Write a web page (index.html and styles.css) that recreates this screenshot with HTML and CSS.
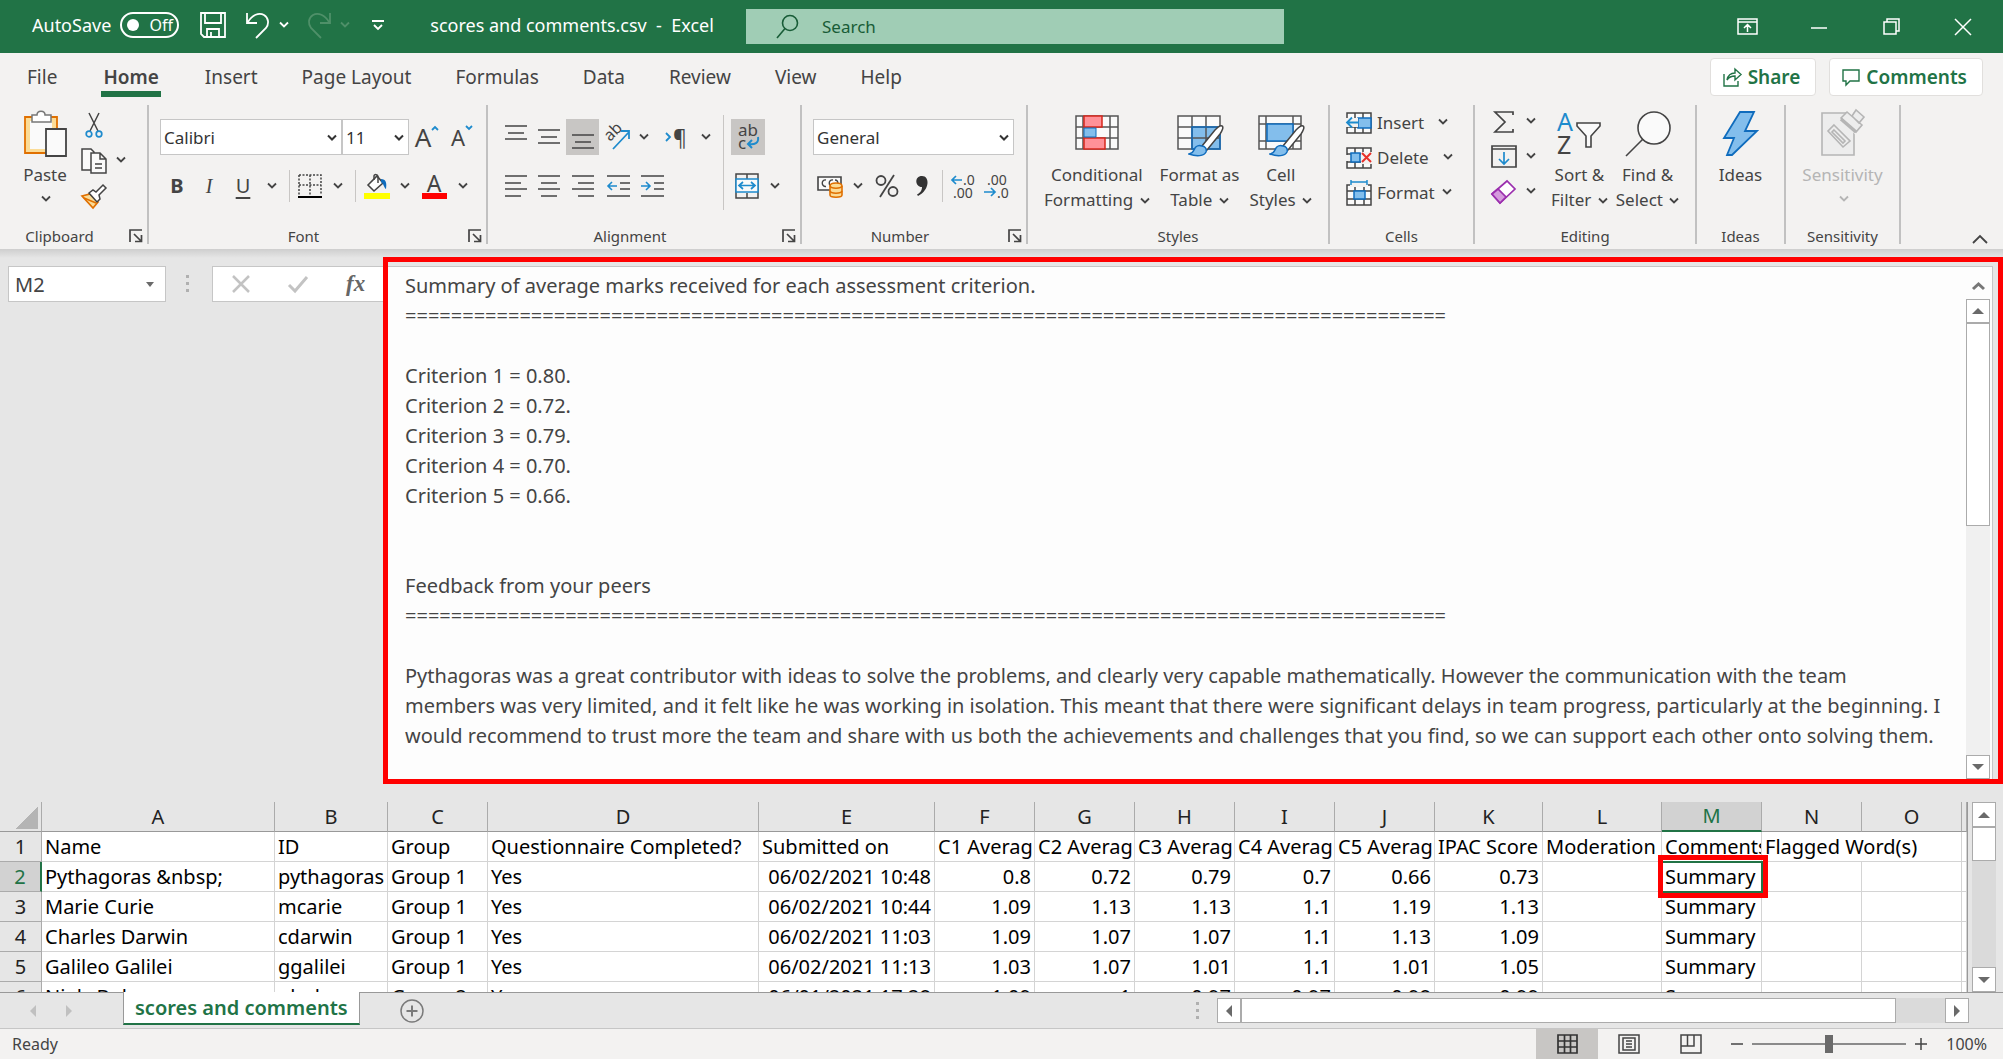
FILE: index.html
```html
<!DOCTYPE html>
<html lang="en">
<head>
    <meta charset="UTF-8">
    <meta name="viewport" content="width=device-width, initial-scale=1.0">
    <title>scores and comments.csv - Excel</title>
    <link rel="stylesheet" href="styles.css">
</head>
<body>
    <!-- shared icons -->
    <svg class="defs" width="0" height="0">
        <symbol id="chev" viewBox="0 0 10 7"><path d="M1 1.5l4 4 4-4" fill="none" stroke="currentColor" stroke-width="1.8"/></symbol>
        <symbol id="launcher" viewBox="0 0 14 14"><path d="M1 13V1h12M5 5l7 7M12.500 6v6.500H6" fill="none" stroke="#444" stroke-width="1.700"/></symbol>
        <symbol id="brush" viewBox="0 0 36 32"><path d="M34 1c2 1 0 5-2 8L19 25l-5-4L27 5c3-3 5-5 7-4z" fill="#fff" stroke="#444" stroke-width="1.500"/><path d="M14 21c3 0 5 3 4 6-2 4-9 5-17 2 5-1 4-3 6-6 1-2 4-3 7-2z" fill="#83beec" stroke="#0f6cbd" stroke-width="1.500"/></symbol>
    </svg>

    <header class="titlebar">
        <div class="quick-access">
            <span>AutoSave</span>
            <button class="toggle" aria-label="AutoSave off"><span class="knob"></span>Off</button>
            <button class="save" aria-label="Save">
                <svg width="26" height="26" viewBox="0 0 26 26" fill="none" stroke="#fff" stroke-width="1.800"><path d="M1 1h24v24H4l-3-3zM5 1v10h16V1M7 25v-8h12v8M11 25v-5"/></svg>
            </button>
            <button class="undo" aria-label="Undo">
                <svg width="25" height="27" viewBox="0 0 25 27" fill="none" stroke="#fff" stroke-width="1.800"><path d="M1 1v10h10M2 10C6 3 13 0 18 3s5 9 2 13l-10 10"/></svg>
                <svg class="chev" width="10" height="7"><use href="#chev"/></svg>
            </button>
            <button class="redo" aria-label="Redo" disabled>
                <svg width="25" height="27" viewBox="0 0 25 27" fill="none" stroke="#4f9069" stroke-width="1.800"><path d="M23 1v10H13M22 10C18 3 11 0 6 3s-5 9-2 13l10 10"/></svg>
                <svg class="chev" width="10" height="7"><use href="#chev"/></svg>
            </button>
            <button class="customize" aria-label="Customize Quick Access Toolbar">
                <svg width="12" height="11" viewBox="0 0 12 11" fill="none" stroke="#fff" stroke-width="1.800"><path d="M0 1h12M2 5l4 4 4-4"/></svg>
            </button>
            <span class="doc-title">scores and comments.csv&nbsp; -&nbsp; Excel</span>
        </div>
        <div class="search">
            <label for="search">
                <svg width="23" height="25" viewBox="0 0 23 25" fill="none" stroke="#185c37" stroke-width="1.600"><circle cx="14" cy="9" r="7.500"/><path d="M9 14.500L1 24"/></svg>
            </label>
            <input type="text" id="search" placeholder="Search">
        </div>
        <div class="window-buttons">
            <button aria-label="Ribbon display options"><svg width="21" height="17" viewBox="0 0 21 17" fill="none" stroke="#fff" stroke-width="1.500"><path d="M1 1h19v15H1zM1 4h19M10.500 14V7M7 10l3.500-3.500L14 10"/></svg></button>
            <button aria-label="Minimize"><svg width="16" height="16" viewBox="0 0 16 16" stroke="#fff" stroke-width="1.500"><path d="M0 9h16"/></svg></button>
            <button aria-label="Restore"><svg width="17" height="17" viewBox="0 0 17 17" fill="none" stroke="#fff" stroke-width="1.500"><path d="M1 4h12v12H1zM4 4V1h12v12h-3"/></svg></button>
            <button aria-label="Close"><svg width="16" height="16" viewBox="0 0 16 16" stroke="#fff" stroke-width="1.500"><path d="M0 0l16 16M16 0L0 16"/></svg></button>
        </div>
    </header>

    <nav class="tabs">
        <a href="#">File</a>
        <a href="#" class="active">Home</a>
        <a href="#">Insert</a>
        <a href="#">Page Layout</a>
        <a href="#">Formulas</a>
        <a href="#">Data</a>
        <a href="#">Review</a>
        <a href="#">View</a>
        <a href="#">Help</a>
        <div class="tab-actions">
            <button>
                <svg width="19" height="19" viewBox="0 0 19 19" fill="none" stroke="#217346" stroke-width="1.400"><path d="M1 6v12h14v-5M4 12c1-5 4-7 8-7V1l6 5.500L12 12V8c-4 0-6 1-8 4z"/></svg>
                Share
            </button>
            <button>
                <svg width="18" height="17" viewBox="0 0 18 17" fill="none" stroke="#217346" stroke-width="1.400"><path d="M1 1h16v11H8l-4 4v-4H1z"/></svg>
                Comments
            </button>
        </div>
    </nav>

    <section class="ribbon">
        <div class="group clipboard">
            <div class="group-body">
                <button class="big">
                    <svg width="43" height="48" viewBox="0 0 43 48"><path d="M1 7h32v36H1z" fill="#fbdc97" stroke="#e07000" stroke-width="1.800"/><path d="M6 11h22v28H6z" fill="#fafafa"/><path d="M8 5h5c0-5 8-5 8 0h6v7H8z" fill="#fff" stroke="#777" stroke-width="1.500"/><path d="M22 19h20v27H22z" fill="#fafafa" stroke="#444" stroke-width="1.800"/></svg>
                    <span>Paste</span>
                    <svg class="chev" width="10" height="7"><use href="#chev"/></svg>
                </button>
                <div class="small-stack">
                    <button aria-label="Cut"><svg width="26" height="26" viewBox="-4 0 26 26" fill="none"><path d="M4 1l9 18M14 1L5 19" stroke="#444" stroke-width="1.500"/><circle cx="4" cy="22" r="2.800" stroke="#1e8bcd" stroke-width="1.700"/><circle cx="14" cy="22" r="2.800" stroke="#1e8bcd" stroke-width="1.700"/></svg></button>
                    <button aria-label="Copy">
                        <svg width="26" height="26" viewBox="0 0 26 26" fill="#fafafa" stroke="#444" stroke-width="1.500"><path d="M1 1h9l3 3v18H1z"/><path d="M10 5h9l6 6v14H10zM19 5v6h6M14 16h7M14 20h7"/></svg>
                        <svg class="chev" width="10" height="7"><use href="#chev"/></svg>
                    </button>
                    <button aria-label="Format Painter"><svg width="26" height="25" viewBox="0 0 26 25"><path d="M1 12l8-2 8 8-5 6z" fill="#fbdc97" stroke="#e07000" stroke-width="1.700"/><path d="M8 9l4-3 3 2 7-7 3 3-7 7 1 4-3 3z" fill="#fff" stroke="#444" stroke-width="1.500"/><path d="M3 14l12 5" stroke="#e07000" stroke-width="1.500"/></svg></button>
                </div>
            </div>
            <div class="group-label"><span>Clipboard</span><button class="launch" aria-label="Clipboard settings"><svg width="14" height="14"><use href="#launcher"/></svg></button></div>
        </div>

        <div class="group font">
            <div class="group-body rows">
                <div class="font-row1">
                    <select aria-label="Font"><option>Calibri</option></select>
                    <select aria-label="Font size"><option>11</option></select>
                    <button class="grow" aria-label="Increase font size">A<svg width="8" height="6" viewBox="0 0 8 6" fill="none" stroke="#1e8bcd" stroke-width="1.800"><path d="M1 5l3-3 3 3"/></svg></button>
                    <button class="shrink" aria-label="Decrease font size">A<svg width="8" height="6" viewBox="0 0 8 6" fill="none" stroke="#1e8bcd" stroke-width="1.800"><path d="M1 1l3 3 3-3"/></svg></button>
                </div>
                <div class="font-row2">
                    <button class="bold">B</button>
                    <button class="italic">I</button>
                    <button class="underline">U</button>
                    <svg class="chev" width="10" height="7"><use href="#chev"/></svg>
                    <span class="sep"></span>
                    <button aria-label="Borders"><svg width="24" height="24" viewBox="0 0 24 24" fill="none" stroke="#444" stroke-width="1.500"><path d="M1 1h22v20M1 1v20M12 1v20M1 11h22" stroke-dasharray="2 1.500"/><path d="M0 23h24" stroke="#000" stroke-width="2"/></svg></button>
                    <svg class="chev" width="10" height="7"><use href="#chev"/></svg>
                    <span class="sep"></span>
                    <button aria-label="Fill color"><svg width="26" height="26" viewBox="0 0 26 26"><path d="M4 12l9-9 6 7-9 8z" fill="#fff" stroke="#444" stroke-width="1.600"/><path d="M10 7V3c0-2 4-2 4 1v6" fill="none" stroke="#444" stroke-width="1.500"/><path d="M17 6c5 0 6 4 5 10-2-1-2-5-5-7z" fill="#0f6cbd"/><path d="M0 20h26v6H0z" fill="#ff0"/></svg></button>
                    <svg class="chev" width="10" height="7"><use href="#chev"/></svg>
                    <button class="font-color" aria-label="Font color">A</button>
                    <svg class="chev" width="10" height="7"><use href="#chev"/></svg>
                </div>
            </div>
            <div class="group-label"><span>Font</span><button class="launch" aria-label="Font settings"><svg width="14" height="14"><use href="#launcher"/></svg></button></div>
        </div>

        <div class="group alignment">
            <div class="group-body">
                <div class="rows">
                    <div class="align-row1">
                        <button aria-label="Top align"><svg width="22" height="24" viewBox="0 0 22 24" stroke="#444" stroke-width="1.600"><path d="M0 1h22M3 8h16M0 14h22"/></svg></button>
                        <button aria-label="Middle align"><svg width="22" height="24" viewBox="0 0 22 24" stroke="#444" stroke-width="1.600"><path d="M0 5h22M3 12h16M0 18h22"/></svg></button>
                        <button class="selected" aria-label="Bottom align"><svg width="22" height="24" viewBox="0 0 22 24" stroke="#444" stroke-width="1.600"><path d="M0 10h22M3 17h16M0 23h22"/></svg></button>
                        <button aria-label="Orientation"><svg width="26" height="26" viewBox="0 0 26 26"><text x="0" y="0" transform="translate(5 18) rotate(-45)" font-size="16" fill="#444">ab</text><path d="M8 25L24 8M16 7h8v8" fill="none" stroke="#1e8bcd" stroke-width="1.800"/></svg></button>
                        <svg class="chev" width="10" height="7"><use href="#chev"/></svg>
                        <button class="pilcrow" aria-label="Text direction"><svg width="6" height="10" viewBox="0 0 6 10" fill="none" stroke="#1e8bcd" stroke-width="1.800"><path d="M1 1l4 4-4 4"/></svg>¶</button>
                        <svg class="chev" width="10" height="7"><use href="#chev"/></svg>
                    </div>
                    <div class="align-row2">
                        <button aria-label="Align left"><svg width="22" height="24" viewBox="0 0 22 24" stroke="#444" stroke-width="1.600"><path d="M0 2h22M0 9h16M0 15h22M0 22h16"/></svg></button>
                        <button aria-label="Center"><svg width="22" height="24" viewBox="0 0 22 24" stroke="#444" stroke-width="1.600"><path d="M0 2h22M3 9h16M0 15h22M3 22h16"/></svg></button>
                        <button aria-label="Align right"><svg width="22" height="24" viewBox="0 0 22 24" stroke="#444" stroke-width="1.600"><path d="M0 2h22M6 9h16M0 15h22M6 22h16"/></svg></button>
                        <button aria-label="Decrease indent"><svg width="23" height="24" viewBox="0 0 23 24" fill="none" stroke="#444" stroke-width="1.600"><path d="M0 2h23M13 9h10M13 15h10M0 22h23"/><path d="M10 12H1M5 8l-4 4 4 4" stroke="#1e8bcd"/></svg></button>
                        <button aria-label="Increase indent"><svg width="23" height="24" viewBox="0 0 23 24" fill="none" stroke="#444" stroke-width="1.600"><path d="M0 2h23M13 9h10M13 15h10M0 22h23"/><path d="M0 12h9M5 8l4 4-4 4" stroke="#1e8bcd"/></svg></button>
                    </div>
                </div>
                <span class="sep tall"></span>
                <div class="rows wrap-col">
                    <button class="selected wrap-text" aria-label="Wrap text"><svg width="24" height="28" viewBox="0 0 24 28"><text x="2" y="13" font-size="17" fill="#444">ab</text><text x="2" y="26" font-size="17" fill="#444">c</text><path d="M22 14c1 6-3 8-10 7M16 17l-4 4 4 4" fill="none" stroke="#1e8bcd" stroke-width="2"/></svg></button>
                    <button class="merge" aria-label="Merge and center">
                        <svg width="24" height="26" viewBox="0 0 24 26" fill="none" stroke="#444" stroke-width="1.500"><path d="M1 1h22v24H1zM12 1v5M12 20v5"/><path d="M1 6h22v13H1z" fill="#fafafa" stroke="#1e8bcd"/><path d="M5 12.500h14M8 9l-4 3.500L8 16M16 9l4 3.500-4 3.500" stroke="#1e8bcd" stroke-width="1.700"/></svg>
                        <svg class="chev" width="10" height="7"><use href="#chev"/></svg>
                    </button>
                </div>
            </div>
            <div class="group-label"><span>Alignment</span><button class="launch" aria-label="Alignment settings"><svg width="14" height="14"><use href="#launcher"/></svg></button></div>
        </div>

        <div class="group number">
            <div class="group-body rows">
                <div class="number-row1">
                    <select aria-label="Number format"><option>General</option></select>
                </div>
                <div class="number-row2">
                    <button aria-label="Accounting format"><svg width="26" height="24" viewBox="0 0 26 24"><path d="M1 3h23v13H1z" fill="#fafafa" stroke="#444" stroke-width="1.600"/><path d="M9 6c-5-1-5 7 0 6.500M16 6c-5-1-5 7 0 6.500M18 6c3 0 3 2 3 4" fill="none" stroke="#444" stroke-width="1.400"/><path d="M13 12c0-4 12-4 12 0v9c0 3-12 3-12 0z" fill="#fbdc97" stroke="#e07000" stroke-width="1.600"/><path d="M13 12c1 3 11 3 12 0M13 17c1 3 11 3 12 0" fill="none" stroke="#e07000" stroke-width="1.600"/></svg></button>
                    <svg class="chev" width="10" height="7"><use href="#chev"/></svg>
                    <button class="percent" aria-label="Percent style"><svg width="24" height="24" viewBox="0 0 24 24" fill="none" stroke="#444" stroke-width="1.800"><circle cx="6" cy="6.500" r="4.500"/><circle cx="18" cy="17.500" r="4.500"/><path d="M19 1L5 23"/></svg></button>
                    <button aria-label="Comma style"><svg width="12" height="20" viewBox="0 0 12 20"><path d="M6 0c8 0 8 14-4 20l-1-1.500c4-2 5-5 5-7.500C-1 11-2 0 6 0z" fill="#333"/></svg></button>
                    <span class="sep"></span>
                    <button aria-label="Increase decimal"><svg width="26" height="26" viewBox="0 0 26 26" fill="none"><text x="13" y="12" font-size="14" fill="#444">.0</text><text x="3" y="25" font-size="14" fill="#444">.00</text><path d="M12 7H2M6 3L2 7l4 4" stroke="#1e8bcd" stroke-width="1.700"/></svg></button>
                    <button aria-label="Decrease decimal"><svg width="26" height="26" viewBox="0 0 26 26" fill="none"><text x="3" y="12" font-size="14" fill="#444">.00</text><text x="13" y="25" font-size="14" fill="#444">.0</text><path d="M0 19h11M7 15l4 4-4 4" stroke="#1e8bcd" stroke-width="1.700"/></svg></button>
                </div>
            </div>
            <div class="group-label"><span>Number</span><button class="launch" aria-label="Number settings"><svg width="14" height="14"><use href="#launcher"/></svg></button></div>
        </div>

        <div class="group styles">
            <div class="group-body">
                <button class="big">
                    <svg width="44" height="48" viewBox="0 0 44 48"><path d="M1 6h42v33H1zM1 17h42M1 28h42M8 6v33M35 6v33" fill="#fafafa" stroke="#555" stroke-width="1.500"/><path d="M9 6h18v11H9zM9 28h21v11H9z" fill="#ff9198" stroke="#d8271c" stroke-width="1.500"/><path d="M9 18h12v9H9z" fill="#83beec" stroke="#0f6cbd"/></svg>
                    <span>Conditional</span>
                    <span>Formatting <svg class="chev" width="10" height="7"><use href="#chev"/></svg></span>
                </button>
                <button class="big">
                    <svg width="48" height="48" viewBox="0 0 48 48"><path d="M2 6h42v33H2z" fill="#fafafa"/><path d="M16 17h28v22H16z" fill="#83beec"/><path d="M2 6h42v33H2zM2 17h42M2 28h42M16 6v33M30 6v33" fill="none" stroke="#555" stroke-width="1.500"/><path d="M16 39V17h28v22z" fill="none" stroke="#0f6cbd" stroke-width="1.500"/><use href="#brush" x="12" y="15" width="36" height="32"/></svg>
                    <span>Format as</span>
                    <span>Table <svg class="chev" width="10" height="7"><use href="#chev"/></svg></span>
                </button>
                <button class="big">
                    <svg width="48" height="48" viewBox="0 0 48 48"><path d="M2 6h42v33H2zM2 14h42M2 31h42M9 6v33M36 6v33" fill="#fafafa" stroke="#555" stroke-width="1.500"/><path d="M10 14h26v17H10z" fill="#83beec" stroke="#0f6cbd" stroke-width="1.500"/><use href="#brush" x="12" y="15" width="36" height="32"/></svg>
                    <span>Cell</span>
                    <span>Styles <svg class="chev" width="10" height="7"><use href="#chev"/></svg></span>
                </button>
            </div>
            <div class="group-label"><span>Styles</span></div>
        </div>

        <div class="group cells">
            <div class="group-body">
                <button>
                    <svg width="26" height="26" viewBox="0 0 26 26"><path d="M1 3h24v20H1zM1 9h24M1 17h24M9 3v20M17 3v20" fill="#fafafa" stroke="#444" stroke-width="1.500"/><path d="M12 8h13v10H12z" fill="#83beec" stroke="#0f6cbd" stroke-width="1.500"/><path d="M0 8h12v9H0z" fill="#f3f2f1"/><path d="M13 12.500H1M6 7.500l-5 5 5 5" fill="none" stroke="#1e8bcd" stroke-width="1.800"/></svg>
                    Insert <svg class="chev far" width="10" height="7"><use href="#chev"/></svg>
                </button>
                <button>
                    <svg width="26" height="26" viewBox="0 0 26 26"><path d="M1 3h24v20H1zM1 9h24M1 17h24M9 3v20M17 3v20" fill="#fafafa" stroke="#444" stroke-width="1.500"/><path d="M15 7h11v12H15zM0 10h5v6H0z" fill="#f3f2f1"/><path d="M5 8h9v9H5z" fill="#83beec" stroke="#0f6cbd" stroke-width="1.500"/><path d="M16 8l9 9M25 8l-9 9" stroke="#e8312a" stroke-width="2"/></svg>
                    Delete <svg class="chev far" width="10" height="7"><use href="#chev"/></svg>
                </button>
                <button>
                    <svg width="26" height="26" viewBox="0 0 26 26"><path d="M1 5h24v20H1zM1 11h24M1 19h24M9 5v20M18 5v20" fill="#fafafa" stroke="#444" stroke-width="1.500"/><path d="M4 0h18v7H4z" fill="#f3f2f1"/><path d="M8 11h11v8H8z" fill="#83beec" stroke="#0f6cbd" stroke-width="1.500"/><path d="M5 2h16M5 0v5M21 0v5" stroke="#1e8bcd" stroke-width="1.500"/></svg>
                    Format <svg class="chev" width="10" height="7"><use href="#chev"/></svg>
                </button>
            </div>
            <div class="group-label"><span>Cells</span></div>
        </div>

        <div class="group editing">
            <div class="group-body">
                <div class="small-stack">
                    <button aria-label="AutoSum"><svg width="26" height="24" viewBox="0 0 26 24" fill="none" stroke="#444" stroke-width="1.700"><path d="M22 5V2H4l10 10L4 22h18v-3"/></svg><svg class="chev" width="10" height="7"><use href="#chev"/></svg></button>
                    <button aria-label="Fill"><svg width="26" height="24" viewBox="0 0 26 24" fill="none" stroke="#444" stroke-width="1.700"><path d="M1 1h24v21H1zM1 4h24"/><path d="M13 7v12M8 14l5 5 5-5" stroke="#1e8bcd"/></svg><svg class="chev" width="10" height="7"><use href="#chev"/></svg></button>
                    <button aria-label="Clear"><svg width="26" height="24" viewBox="0 0 26 24"><path d="M1 14L16 1l8 8L9 23z" fill="#fff" stroke="#9b2fae" stroke-width="1.700"/><path d="M1 14l6-5 8 8-6 6z" fill="#d59add" stroke="#9b2fae" stroke-width="1.700"/></svg><svg class="chev" width="10" height="7"><use href="#chev"/></svg></button>
                </div>
                <button class="big">
                    <svg width="46" height="48" viewBox="0 0 46 48" fill="none"><text x="1" y="21" font-size="25" fill="#1e8bcd">A</text><text x="1" y="44" font-size="25" fill="#444">Z</text><path d="M21 13h23v3l-9 10v11h-5V26l-9-10z" fill="#fafafa" stroke="#444" stroke-width="1.600"/></svg>
                    <span>Sort &amp;</span>
                    <span>Filter <svg class="chev" width="10" height="7"><use href="#chev"/></svg></span>
                </button>
                <button class="big">
                    <svg width="46" height="48" viewBox="0 0 46 48" stroke="#444" stroke-width="1.600"><circle cx="29" cy="18" r="16" fill="#fafafa"/><path d="M18 29L1 46"/></svg>
                    <span>Find &amp;</span>
                    <span>Select <svg class="chev" width="10" height="7"><use href="#chev"/></svg></span>
                </button>
            </div>
            <div class="group-label"><span>Editing</span></div>
        </div>

        <div class="group ideas">
            <div class="group-body">
                <button class="big">
                    <svg width="36" height="48" viewBox="0 0 36 48"><path d="M17 2h14l-9 19h12L9 45H4l7-17H1z" fill="#83beec" stroke="#0f6cbd" stroke-width="1.800"/></svg>
                    <span>Ideas</span>
                </button>
            </div>
            <div class="group-label"><span>Ideas</span></div>
        </div>

        <div class="group sensitivity">
            <div class="group-body">
                <button class="big" disabled>
                    <svg width="44" height="48" viewBox="0 0 44 48" fill="#ededed" stroke="#b5b5b5" stroke-width="1.600"><path d="M1 3h32v42H1z"/><path d="M13 15l16 16-7 6L7 21zM13 20l11 11-2 2-11-11z"/><path d="M20 9l9-9 14 14-9 9z" stroke="#f3f2f1" fill="#f3f2f1"/><path d="M20 8l6-6 15 13-6 7zM31 6l4-6 8 7-5 6z"/><path d="M20 9l15 13" stroke-width="3.500"/></svg>
                    <span>Sensitivity</span>
                    <svg class="chev" width="10" height="7"><use href="#chev"/></svg>
                </button>
            </div>
            <div class="group-label"><span>Sensitivity</span></div>
        </div>

        <button class="collapse" aria-label="Collapse ribbon"><svg width="16" height="10" viewBox="0 0 16 10" fill="none" stroke="#444" stroke-width="1.800"><path d="M1 9l7-7 7 7"/></svg></button>
    </section>

    <section class="formula-bar">
        <div class="name-box">
            <input type="text" value="M2" aria-label="Name box">
            <span class="tri down small"></span>
        </div>
        <span class="dots"><i></i><i></i><i></i></span>
        <div class="formula-buttons">
            <button aria-label="Cancel"><svg width="18" height="18" viewBox="0 0 18 18" stroke="#c3c3c3" stroke-width="2.500"><path d="M1 1l16 16M17 1L1 17"/></svg></button>
            <button aria-label="Enter"><svg width="20" height="17" viewBox="0 0 20 17" fill="none" stroke="#c3c3c3" stroke-width="3"><path d="M1 9l6 6L19 1"/></svg></button>
            <button class="fx" aria-label="Insert function">fx</button>
        </div>
        <div class="formula-highlight">
            <div class="formula-box">
                <textarea id="formula" aria-label="Formula bar" rows="16" spellcheck="false">Summary of average marks received for each assessment criterion.
===========================================================================================

Criterion 1 = 0.80.
Criterion 2 = 0.72.
Criterion 3 = 0.79.
Criterion 4 = 0.70.
Criterion 5 = 0.66.


Feedback from your peers
===========================================================================================

Pythagoras was a great contributor with ideas to solve the problems, and clearly very capable mathematically. However the communication with the team
members was very limited, and it felt like he was working in isolation. This meant that there were significant delays in team progress, particularly at the beginning. I
would recommend to trust more the team and share with us both the achievements and challenges that you find, so we can support each other onto solving them.</textarea>
                <div class="formula-scroll">
                    <button class="collapse-bar" aria-label="Collapse formula bar"><svg width="13" height="9" viewBox="0 0 13 9" fill="none" stroke="#777" stroke-width="3"><path d="M1 8l5.500-5L12 8"/></svg></button>
                    <button class="arrow" aria-label="Scroll up"><span class="tri up"></span></button>
                    <div class="track"><div class="thumb"></div></div>
                    <button class="arrow" aria-label="Scroll down"><span class="tri down"></span></button>
                </div>
            </div>
        </div>
    </section>

    <main class="sheet">
        <div class="grid-wrap">
            <table class="grid">
                <colgroup>
                    <col class="c-head"><col class="c-a"><col class="c-b"><col class="c-c"><col class="c-d"><col class="c-e">
                    <col class="c-std" span="5"><col class="c-k"><col class="c-l"><col class="c-std" span="3"><col class="c-rest">
                </colgroup>
                <thead>
                    <tr><th class="corner"></th><th>A</th><th>B</th><th>C</th><th>D</th><th>E</th><th>F</th><th>G</th><th>H</th><th>I</th><th>J</th><th>K</th><th>L</th><th class="current">M</th><th>N</th><th>O</th><th></th></tr>
                </thead>
                <tbody>
                    <tr><th>1</th><td>Name</td><td>ID</td><td>Group</td><td>Questionnaire Completed?</td><td>Submitted on</td><td>C1 Averag</td><td>C2 Averag</td><td>C3 Averag</td><td>C4 Averag</td><td>C5 Averag</td><td>IPAC Score</td><td>Moderation</td><td>Comments</td><td colspan="2">Flagged Word(s)</td><td></td></tr>
                    <tr><th class="current">2</th><td>Pythagoras &amp;nbsp;</td><td>pythagoras</td><td>Group 1</td><td>Yes</td><td class="num">06/02/2021 10:48</td><td class="num">0.8</td><td class="num">0.72</td><td class="num">0.79</td><td class="num">0.7</td><td class="num">0.66</td><td class="num">0.73</td><td></td><td class="active-cell">Summary<span class="marker"></span></td><td></td><td></td><td></td></tr>
                    <tr><th>3</th><td>Marie Curie</td><td>mcarie</td><td>Group 1</td><td>Yes</td><td class="num">06/02/2021 10:44</td><td class="num">1.09</td><td class="num">1.13</td><td class="num">1.13</td><td class="num">1.1</td><td class="num">1.19</td><td class="num">1.13</td><td></td><td>Summary</td><td></td><td></td><td></td></tr>
                    <tr><th>4</th><td>Charles Darwin</td><td>cdarwin</td><td>Group 1</td><td>Yes</td><td class="num">06/02/2021 11:03</td><td class="num">1.09</td><td class="num">1.07</td><td class="num">1.07</td><td class="num">1.1</td><td class="num">1.13</td><td class="num">1.09</td><td></td><td>Summary</td><td></td><td></td><td></td></tr>
                    <tr><th>5</th><td>Galileo Galilei</td><td>ggalilei</td><td>Group 1</td><td>Yes</td><td class="num">06/02/2021 11:13</td><td class="num">1.03</td><td class="num">1.07</td><td class="num">1.01</td><td class="num">1.1</td><td class="num">1.01</td><td class="num">1.05</td><td></td><td>Summary</td><td></td><td></td><td></td></tr>
                    <tr><th>6</th><td>Niels Bohr</td><td>nbohr</td><td>Group 2</td><td>Yes</td><td class="num">06/01/2021 17:28</td><td class="num">1.09</td><td class="num">1</td><td class="num">0.97</td><td class="num">0.97</td><td class="num">0.98</td><td class="num">0.99</td><td></td><td>Summary</td><td></td><td></td><td></td></tr>
                </tbody>
            </table>
        </div>
        <div class="vscroll">
            <button class="arrow" aria-label="Scroll up"><span class="tri up"></span></button>
            <div class="track"><div class="thumb"></div></div>
            <button class="arrow" aria-label="Scroll down"><span class="tri down"></span></button>
        </div>
    </main>

    <div class="sheet-bar">
        <button class="nav-prev" aria-label="Previous sheet"><span class="tri left pale"></span></button>
        <button class="nav-next" aria-label="Next sheet"><span class="tri right pale"></span></button>
        <a href="#" class="sheet-tab">scores and comments</a>
        <button class="add-sheet" aria-label="New sheet"><svg width="24" height="24" viewBox="0 0 24 24" fill="none" stroke="#7a7a7a" stroke-width="1.500"><circle cx="12" cy="12" r="11"/><path d="M12 6.500v11M6.500 12h11" stroke-width="2"/></svg></button>
        <span class="dots"><i></i><i></i><i></i></span>
        <div class="hscroll">
            <button class="arrow" aria-label="Scroll left"><span class="tri left"></span></button>
            <div class="track"><div class="thumb"></div></div>
            <button class="arrow" aria-label="Scroll right"><span class="tri right"></span></button>
        </div>
    </div>

    <footer class="status-bar">
        <span class="ready">Ready</span>
        <button class="view selected" aria-label="Normal view"><svg width="21" height="20" viewBox="0 0 21 20" fill="none" stroke="#333" stroke-width="1.700"><path d="M1 1h19v18H1zM1 7h19M1 13h19M7.500 1v18M13.500 1v18"/></svg></button>
        <button class="view" aria-label="Page layout view"><svg width="22" height="20" viewBox="0 0 22 20" fill="none" stroke="#444" stroke-width="1.500"><path d="M1 1h20v18H1zM5 4h12v12H5zM8 7h6M8 10h6M8 13h6"/></svg></button>
        <button class="view" aria-label="Page break preview"><svg width="22" height="20" viewBox="0 0 22 20" fill="none" stroke="#444" stroke-width="1.500"><path d="M1 1h20v18H1zM1 12h13V1M7.500 1v11"/></svg></button>
        <button class="zoom-step" aria-label="Zoom out"><svg width="12" height="12" viewBox="0 0 12 12" stroke="#444" stroke-width="1.500"><path d="M0 6h12"/></svg></button>
        <input type="range" min="10" max="190" value="100" aria-label="Zoom">
        <button class="zoom-step" aria-label="Zoom in"><svg width="12" height="12" viewBox="0 0 12 12" stroke="#444" stroke-width="1.500"><path d="M0 6h12M6 0v12"/></svg></button>
        <span class="zoom-value">100%</span>
    </footer>
</body>
</html>
```
FILE: styles.css
```css
* {
    box-sizing: border-box;
}
body {
    margin: 0;
    height: 100vh;
    display: flex;
    flex-direction: column;
    overflow: hidden;
    background: #e6e6e6;
    color: #444;
    font-family: "Noto Sans", "Open Sans", sans-serif;
    font-size: 17px;
}
button {
    display: flex;
    align-items: center;
    justify-content: center;
    padding: 0;
    border: none;
    background: none;
    color: inherit;
    font: inherit;
    white-space: nowrap;
}
svg {
    flex: none;
    overflow: visible;
}
a {
    color: inherit;
    text-decoration: none;
}
.defs {
    position: absolute;
}

/* title bar */
.titlebar {
    flex: none;
    display: grid;
    grid-template-columns: 746px 538px 1fr;
    align-items: center;
    height: 53px;
    background: #217346;
    color: #fff;
    font-size: 17px;
}
.quick-access {
    display: flex;
    align-items: center;
    height: 100%;
    padding: 0 0 3px 32px;
    font-size: 18px;
    white-space: nowrap;
}
.toggle {
    width: 59px;
    height: 26px;
    margin-left: 9px;
    border: 2px solid #fff;
    border-radius: 13px;
    font-size: 16px;
    gap: 11px;
}
.knob {
    width: 12px;
    height: 12px;
    border-radius: 50%;
    background: #fff;
}
.save {
    margin-left: 21px;
}
.undo {
    margin-left: 20px;
    gap: 6px;
}
.redo {
    margin-left: 18px;
    gap: 6px;
    color: #4f9069;
}
.customize {
    margin-left: 22px;
}
.doc-title {
    margin-left: 46px;
}
.search {
    display: flex;
    align-items: center;
    height: 35px;
    padding-left: 30px;
    background: #a0cdb5;
}
.search label {
    display: flex;
}
.search input {
    flex: 1;
    margin-left: 23px;
    padding: 0;
    border: none;
    background: none;
    font: inherit;
}
.search input::placeholder {
    color: #185c37;
    opacity: 1;
}
.window-buttons {
    display: flex;
    justify-content: flex-end;
    padding-right: 4px;
}
.window-buttons button {
    width: 72px;
}

/* ribbon tabs */
.tabs {
    flex: none;
    display: flex;
    align-items: center;
    gap: 44px;
    height: 52px;
    padding: 0 20px 4px 27px;
    background: #f3f2f1;
    font-size: 19px;
    white-space: nowrap;
}
.tabs .active {
    align-self: stretch;
    margin-bottom: 4px;
    padding: 11px 2px 0;
    border-bottom: 6px solid #217346;
    font-weight: 600;
}
.tab-actions {
    display: flex;
    gap: 13px;
    margin-left: auto;
}
.tab-actions button {
    height: 38px;
    padding: 0 15px 0 12px;
    gap: 6px;
    border: 1px solid #e1dfdd;
    border-radius: 4px;
    background: #fff;
    color: #217346;
    font-weight: 600;
}

/* ribbon */
.ribbon {
    flex: none;
    display: flex;
    height: 144px;
    background: #f3f2f1;
}
.group {
    display: flex;
    flex-direction: column;
    border-right: 2px solid;
    border-image: linear-gradient(#c1c1c1 138px, transparent 138px) 1;
}
.group-body {
    flex: 1;
    display: flex;
}
.group-label {
    display: flex;
    justify-content: center;
    position: relative;
    height: 25px;
    font-size: 15px;
    line-height: 24px;
}
.launch {
    position: absolute;
    right: 4px;
    top: 5px;
}
.clipboard { width: 149px; }
.font { width: 339px; }
.alignment { width: 314px; }
.number { width: 226px; }
.styles { width: 302px; }
.cells { width: 145px; }
.editing { width: 222px; }
.ideas { width: 89px; }
.sensitivity { width: 115px; }
.clipboard .group-label,
.font .group-label,
.alignment .group-label,
.number .group-label {
    padding-right: 28px;
}

.big {
    flex-direction: column;
    justify-content: flex-start;
    padding-top: 5px;
    line-height: 25px;
}
.big > svg:first-child {
    margin-bottom: 4px;
}
.big > .chev {
    margin-top: 8px;
}
.chev {
    margin-left: 2px;
    margin-bottom: 2px;
}
.small-stack {
    display: flex;
    flex-direction: column;
    gap: 11px;
    padding-top: 7px;
}
.small-stack button {
    justify-content: flex-start;
    height: 25px;
    gap: 7px;
}
.clipboard .big {
    width: 66px;
    margin-left: 12px;
}
.clipboard .small-stack {
    padding-left: 3px;
}
.rows {
    display: flex;
    flex-direction: column;
    gap: 13px;
    padding-top: 14px;
}
.font-row1, .font-row2, .align-row1, .align-row2, .number-row1, .number-row2 {
    display: grid;
    align-items: center;
    justify-items: center;
    height: 36px;
}
.selected {
    background: #c8c6c4;
}
.sep {
    width: 1px;
    height: 32px;
    background: #c8c6c4;
}
.sep.tall {
    height: 95px;
    margin: 10px 7px 0 12px;
}

select {
    width: 100%;
    height: 36px;
    padding: 0 3px;
    border: 1px solid #c6c6c6;
    border-radius: 0;
    appearance: none;
    background-color: #fff;
    color: #333;
    font: inherit;
    background-image: url("data:image/svg+xml,%3Csvg xmlns='http://www.w3.org/2000/svg' viewBox='0 0 10 7'%3E%3Cpath d='M1 1.500l4 4 4-4' fill='none' stroke='%23333' stroke-width='2'/%3E%3C/svg%3E");
    background-repeat: no-repeat;
    background-position: right 4px center;
    background-size: 10px 7px;
}
.font .rows, .number .rows {
    padding-left: 11px;
}
.font-row1 {
    grid-template-columns: 182px 67px 36px 34px;
}
.font-row2 {
    grid-template-columns: 34px 30px 38px 18px 18px 24px 30px 6px 38px 16px 44px 12px;
}
.grow, .shrink {
    align-items: flex-start;
    font-size: 26px;
    line-height: 30px;
}
.shrink {
    font-size: 22px;
}
.grow svg, .shrink svg {
    margin-top: 3px;
}
.bold, .italic, .underline {
    font-size: 20px;
    line-height: 24px;
}
.bold {
    font-weight: 700;
}
.italic {
    font-family: "Liberation Serif", serif;
    font-style: italic;
}
.underline {
    text-decoration: underline;
    text-underline-offset: 4px;
}
.font-color {
    width: 25px;
    height: 26px;
    border-bottom: 6px solid #f00;
    font-size: 23px;
    line-height: 18px;
}
.alignment .group-body {
    padding-left: 11px;
}
.align-row1 {
    grid-template-columns: 33px 34px 33px 38px 12px 54px 4px;
}
.align-row2 {
    grid-template-columns: 33px 34px 33px 39px 28px;
}
.align-row1 .selected {
    width: 33px;
    height: 36px;
}
.pilcrow {
    gap: 2px;
    font-size: 21px;
}
.wrap-col button {
    height: 36px;
}
.wrap-text {
    width: 34px;
}
.merge {
    gap: 9px;
    padding-left: 4px;
}
.alignment .rows:first-child {
    width: 212px;
}
.number-row1 {
    grid-template-columns: 201px;
}
.number-row2 {
    grid-template-columns: 34px 20px 40px 30px 10px 32px 36px;
}

.styles .group-body {
    padding-left: 16px;
    gap: 10px;
}
.cells .group-body {
    flex-direction: column;
    align-items: flex-start;
    gap: 10px;
    padding: 5px 0 0 16px;
}
.cells button {
    height: 25px;
    gap: 5px;
}
.chev.far {
    margin-left: 9px;
}
.editing .small-stack {
    width: 54px;
    gap: 10px;
    padding: 4px 0 0 16px;
}
.editing .big {
    margin-left: 22px;
}
.editing .big + .big {
    margin-left: 8px;
}
.ideas .group-body, .sensitivity .group-body {
    justify-content: center;
}
.sensitivity .big {
    color: #b5b5b5;
}
.collapse {
    align-self: flex-end;
    margin: 0 15px 5px auto;
}

/* formula bar */
.formula-bar {
    flex: none;
    display: flex;
    align-items: flex-start;
    padding: 8px 0 18px 8px;
    background: linear-gradient(#cecece, #e6e6e6 9px);
}
.name-box {
    display: flex;
    align-items: center;
    width: 158px;
    height: 36px;
    margin-top: 9px;
    padding: 0 11px 0 6px;
    border: 1px solid #c6c6c6;
    background: #fff;
}
.name-box input {
    width: 100%;
    padding: 0;
    border: none;
    color: #444;
    font: inherit;
    font-size: 20px;
}
.dots {
    display: flex;
    flex-direction: column;
    gap: 4px;
}
.dots i {
    width: 3px;
    height: 3px;
    background: #b0b0b0;
}
.formula-bar .dots {
    margin: 18px 23px 0 20px;
}
.formula-buttons {
    display: flex;
    align-items: center;
    gap: 38px;
    width: 171px;
    height: 36px;
    margin-top: 9px;
    padding-left: 19px;
    border: 1px solid #c6c6c6;
    border-right: none;
    background: #fff;
}
.fx {
    font: italic 700 23px "Liberation Serif", serif;
    color: #666;
}
.formula-highlight {
    flex: 1;
    padding: 4px 5px 0 0;
    border: 5px solid #f00;
}
.formula-box {
    display: flex;
    padding: 4px 2px 0 0;
    border: 1px solid #c6c6c6;
    border-width: 1px 1px 0 0;
    background: #fdfdfd;
}
#formula {
    flex: 1;
    padding: 0 0 0 17px;
    margin-bottom: 28px;
    border: none;
    resize: none;
    overflow: hidden;
    background: none;
    color: #444;
    font-family: inherit;
    font-size: 20px;
    line-height: 30px;
}
.formula-scroll {
    display: flex;
    flex-direction: column;
    width: 24px;
}
.collapse-bar {
    height: 28px;
}
.arrow {
    flex: none;
    width: 24px;
    height: 25px;
    border: 1px solid #ababab;
    background: #fff;
}
.track {
    flex: 1;
    background: #dadada;
}
.thumb {
    border: 1px solid #ababab;
    background: #fff;
}
.formula-scroll .arrow {
    height: 24px;
}
.formula-scroll .track {
    background: #f0f0f0;
}
.formula-scroll .thumb {
    height: 47%;
}
.tri {
    border: 6px solid transparent;
}
.tri.up {
    border-top: none;
    border-bottom-color: #6a6a6a;
}
.tri.down {
    border-bottom: none;
    border-top-color: #6a6a6a;
}
.tri.left {
    border-left: none;
    border-right-color: #6a6a6a;
}
.tri.right {
    border-right: none;
    border-left-color: #6a6a6a;
}
.tri.small {
    border-width: 5px 4px 0;
}
.tri.left.pale {
    border-right-color: #c0c0c0;
}
.tri.right.pale {
    border-left-color: #c0c0c0;
}

/* sheet */
.sheet {
    flex: 1;
    display: flex;
    gap: 4px;
    min-height: 0;
    padding-right: 7px;
    border-bottom: 1px solid #999;
}
.grid-wrap {
    flex: 1;
    overflow: hidden;
    border-right: 1px solid #999;
}
.grid {
    width: 100%;
    table-layout: fixed;
    border-collapse: separate;
    border-spacing: 0;
    color: #000;
    font-size: 20px;
    line-height: 29px;
}
.grid th, .grid td {
    height: 30px;
    padding: 0 3px;
    overflow: hidden;
    border-right: 1px solid #d4d4d4;
    border-bottom: 1px solid #d4d4d4;
    white-space: nowrap;
    text-align: left;
}
.grid td {
    background: #fff;
}
.grid th {
    padding: 0;
    border-color: #ababab;
    background: #e6e6e6;
    color: #222;
    font-weight: 400;
    text-align: center;
}
.grid thead th {
    border-bottom-color: #999;
}
.grid .current {
    background: #d2d2d2;
    color: #217346;
}
.grid thead .current {
    border-bottom: 2px solid #217346;
    line-height: 28px;
}
.grid tbody .current {
    border-right: 2px solid #217346;
}
.grid .corner {
    background: linear-gradient(135deg, #e6e6e6 50%, #b4b4b4 50%) no-repeat 16px 5px / 22px 22px, #e6e6e6;
}
.grid .num {
    text-align: right;
}
.grid .active-cell {
    position: relative;
    overflow: visible;
    outline: 2px solid #217346;
    outline-offset: -1px;
}
/* red frame drawn over the neighbouring cells */
.marker {
    position: absolute;
    z-index: 1;
    inset: -7px -7px -7px -4px;
    border: 5px solid #f00;
}
.c-head { width: 42px; }
.c-a { width: 233px; }
.c-b { width: 113px; }
.c-c { width: 100px; }
.c-d { width: 271px; }
.c-e { width: 176px; }
.c-std { width: 100px; }
.c-k { width: 108px; }
.c-l { width: 119px; }
.vscroll {
    display: flex;
    flex-direction: column;
    width: 24px;
    background: #dadada;
}
.vscroll .thumb {
    height: 34px;
}

/* sheet tabs */
.sheet-bar {
    flex: none;
    display: flex;
    align-items: center;
    height: 36px;
    padding: 0 34px 0 30px;
    border-bottom: 1px solid #c6c6c6;
}
.nav-next {
    margin-left: 30px;
}
.sheet-tab {
    align-self: flex-start;
    height: 33px;
    margin: -1px 0 0 51px;
    padding: 0 11px;
    border: 1px solid #999;
    border-top: none;
    border-bottom: 2px solid #217346;
    background: #fff;
    color: #217346;
    font-size: 20px;
    font-weight: 600;
    line-height: 32px;
}
.add-sheet {
    margin-left: 40px;
}
.sheet-bar .dots {
    margin: 0 18px 0 auto;
}
.hscroll {
    display: flex;
    width: 752px;
    height: 25px;
}
.hscroll .thumb {
    width: 93%;
    height: 100%;
}

/* status bar */
.status-bar {
    flex: none;
    display: flex;
    align-items: center;
    height: 30px;
    padding: 0 16px 0 12px;
    background: #f3f2f1;
    font-size: 16px;
}
.ready {
    margin-right: auto;
}
.view {
    width: 62px;
    height: 30px;
}
.zoom-step {
    width: 30px;
}
.status-bar input {
    width: 154px;
    height: 24px;
    margin: 0;
    appearance: none;
    background: linear-gradient(#8a8a8a, #8a8a8a) no-repeat center / 100% 2px;
}
.status-bar input::-webkit-slider-thumb {
    appearance: none;
    width: 8px;
    height: 18px;
    background: #6a6a6a;
}
.zoom-value {
    margin-left: 10px;
}
```
